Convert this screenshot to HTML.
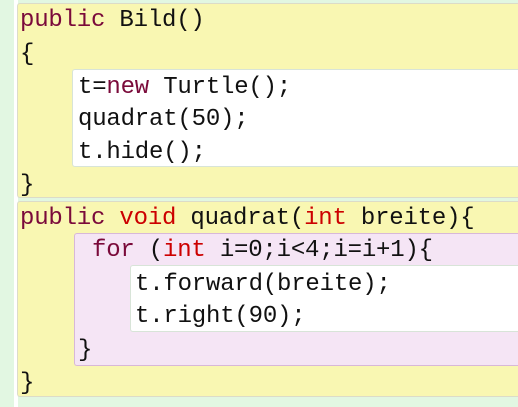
<html><head><style>
body{margin:0;width:518px;height:407px;background:#e2f7e2;position:relative;overflow:hidden;font-family:"Liberation Mono",monospace;font-size:24px;letter-spacing:-0.2px;color:#111}
div{position:absolute;box-sizing:border-box}
.y{background:#f9f7b2;border:1px solid #dcdcc8;border-right:none;border-radius:3px 0 0 3px}
.w{background:#fff;border:1px solid #d8e4d8;border-right:none;border-radius:3px 0 0 3px}
.p{background:#f5e5f5;border:1px solid #d8b8d8;border-right:none;border-radius:3px 0 0 3px}
.t{position:absolute;white-space:pre;line-height:24px}
.k{color:#7a0a3a}.r{color:#cc0000}
.s{left:14px;top:0;width:4px;height:407px;background:#fff;position:absolute}
</style></head><body>
<div class="s"></div>
<div class="y" style="left:17px;top:3px;width:510px;height:195px"></div>
<div class="w" style="left:72px;top:69px;width:460px;height:98px"></div>
<div class="y" style="left:17px;top:201px;width:510px;height:196px"></div>
<div class="p" style="left:74px;top:233px;width:460px;height:133px"></div>
<div class="w" style="left:130px;top:265px;width:400px;height:67px"></div>
<span class="t" style="left:20px;top:9px"><span class="k">public</span> Bild()</span>
<span class="t" style="left:20px;top:43px">{</span>
<span class="t" style="left:78px;top:76px">t=<span class="k">new</span> Turtle();</span>
<span class="t" style="left:78px;top:108px">quadrat(50);</span>
<span class="t" style="left:78px;top:141px">t.hide();</span>
<span class="t" style="left:20px;top:174px">}</span>
<span class="t" style="left:20px;top:207px"><span class="k">public</span> <span class="r">void</span> quadrat(<span class="r">int</span> breite){</span>
<span class="t" style="left:92px;top:239px"><span class="k">for</span> (<span class="r">int</span> i=0;i&lt;4;i=i+1){</span>
<span class="t" style="left:135px;top:273px">t.forward(breite);</span>
<span class="t" style="left:135px;top:305px">t.right(90);</span>
<span class="t" style="left:78px;top:339px">}</span>
<span class="t" style="left:20px;top:372px">}</span>
</body></html>
